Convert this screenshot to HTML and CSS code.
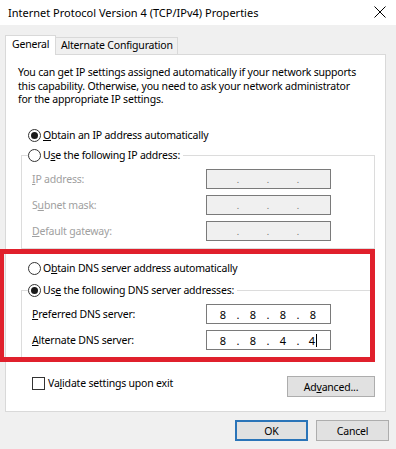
FILE: index.html
```html
<!DOCTYPE html>
<html lang="en">
<head>
  <meta charset="UTF-8">
  <title>Internet Protocol Version 4 (TCP/IPv4) Properties</title>
  <link rel="stylesheet" href="styles.css">
</head>
<body>
  <div class="titlebar">
    <span class="title">Internet Protocol Version 4 (TCP/IPv4) Properties</span>
    <svg class="close" width="12" height="12" viewBox="0 0 12 12">
      <path d="M0.5 0.5 L11.5 11.5 M11.5 0.5 L0.5 11.5" stroke="#000" stroke-width="1" fill="none"/>
    </svg>
  </div>

  <div class="tabs">
    <div class="tab active">General</div>
    <div class="tab">Alternate Configuration</div>
  </div>

  <div class="panel">
    <p class="intro">You can get IP settings assigned automatically if your network supports<br>this capability. Otherwise, you need to ask your network administrator<br>for the appropriate IP settings.</p>

    <label class="radio-row ip-auto"><span class="radio checked"></span><span><u>O</u>btain an IP address automatically</span></label>

    <fieldset class="group ip-group">
      <legend><label class="radio-row"><span class="radio"></span><span>U<u>s</u>e the following IP address:</span></label></legend>
      <div class="field-row disabled">
        <span class="field-label"><u>I</u>P address:</span>
        <div class="ip-box"><span class="octet"></span><span class="dot">.</span><span class="octet"></span><span class="dot">.</span><span class="octet"></span><span class="dot">.</span><span class="octet"></span></div>
      </div>
      <div class="field-row disabled">
        <span class="field-label">S<u>u</u>bnet mask:</span>
        <div class="ip-box"><span class="octet"></span><span class="dot">.</span><span class="octet"></span><span class="dot">.</span><span class="octet"></span><span class="dot">.</span><span class="octet"></span></div>
      </div>
      <div class="field-row disabled">
        <span class="field-label"><u>D</u>efault gateway:</span>
        <div class="ip-box"><span class="octet"></span><span class="dot">.</span><span class="octet"></span><span class="dot">.</span><span class="octet"></span><span class="dot">.</span><span class="octet"></span></div>
      </div>
    </fieldset>

    <label class="radio-row dns-auto"><span class="radio"></span><span>O<u>b</u>tain DNS server address automatically</span></label>

    <fieldset class="group dns-group">
      <legend><label class="radio-row"><span class="radio checked"></span><span>Us<u>e</u> the following DNS server addresses:</span></label></legend>
      <div class="field-row">
        <span class="field-label"><u>P</u>referred DNS server:</span>
        <div class="ip-box"><span class="octet">8</span><span class="dot">.</span><span class="octet">8</span><span class="dot">.</span><span class="octet">8</span><span class="dot">.</span><span class="octet">8</span></div>
      </div>
      <div class="field-row">
        <span class="field-label"><u>A</u>lternate DNS server:</span>
        <div class="ip-box"><span class="octet">8</span><span class="dot">.</span><span class="octet">8</span><span class="dot">.</span><span class="octet">4</span><span class="dot">.</span><span class="octet">4<span class="caret"></span></span></div>
      </div>
    </fieldset>

    <div class="options">
      <label class="check-row"><span class="checkbox"></span><span>Va<u>l</u>idate settings upon exit</span></label>
      <button class="btn advanced">Ad<u>v</u>anced...</button>
    </div>
  </div>

  <div class="footer">
    <button class="btn default">OK</button>
    <button class="btn">Cancel</button>
  </div>

  <!-- highlight drawn over the DNS section -->
  <div class="highlight"></div>
</body>
</html>
```

FILE: styles.css
```css
* {
  margin: 0;
  padding: 0;
  box-sizing: border-box;
}

body {
  width: 396px;
  height: 449px;
  overflow: hidden;
  position: relative;
  background: #f0f0f0;
  font-family: 'Noto Sans', sans-serif;
  font-size: 10.5px;
  letter-spacing: -0.2px;
  color: #000;
}

u {
  text-decoration: underline;
  text-underline-offset: 1px;
}

.titlebar {
  height: 25px;
  background: #fff;
  display: flex;
  align-items: center;
  justify-content: space-between;
  padding: 0 10px 1px 8px;
}

.title {
  font-size: 11px;
  letter-spacing: 0;
}

.tabs {
  display: flex;
  align-items: flex-end;
  height: 19px;
  margin: 10px 0 0 5px;
  position: relative;
  z-index: 1;
  white-space: nowrap;
}

.tab {
  height: 17px;
  border: 1px solid #d9d9d9;
  border-bottom: none;
  background: #f0f0f0;
  line-height: 15px;
  padding-left: 5px;
  width: 123px;
  margin-left: -1px;
}

.tab.active {
  width: 51px;
  height: 20px;
  margin-left: 0;
  margin-bottom: -1px;
  padding-left: 6px;
  line-height: 16px;
  background: #fff;
  position: relative;
  z-index: 2;
}

.panel {
  margin-left: 5px;
  width: 381px;
  height: 358px;
  border: 1px solid #d9d9d9;
  background: #fff;
}

.intro {
  margin: 11px 0 0 12px;
  line-height: 13.5px;
  white-space: nowrap;
}

.radio-row,
.check-row {
  display: flex;
  align-items: center;
  height: 18px;
  white-space: nowrap;
}

.radio {
  width: 13px;
  height: 13px;
  border: 1px solid #333;
  border-radius: 50%;
  background: #fff;
  margin-right: 2px;
  display: flex;
  align-items: center;
  justify-content: center;
  flex-shrink: 0;
}

.radio.checked::after {
  content: '';
  width: 7px;
  height: 7px;
  border-radius: 50%;
  background: #1a1a1a;
}

.checkbox {
  width: 13px;
  height: 13px;
  border: 1px solid #333;
  background: #fff;
  margin-right: 3px;
  flex-shrink: 0;
}

.ip-auto {
  margin: 19.5px 0 0 22px;
}

.dns-auto {
  margin: 10px 0 0 22px;
}

.group {
  border: 1px solid #dcdcdc;
  margin: 2px 10px 0 15px;
  padding: 0 0 7px;
  min-width: 0;
}

.dns-group {
  margin-top: 4px;
}

.group legend {
  margin-left: 6px;
  padding-right: 3px;
}

.field-row {
  display: flex;
  align-items: center;
  padding-left: 10px;
  margin-top: 5px;
}

.field-row + .field-row {
  margin-top: 6px;
}

.field-label {
  width: 174px;
}

.ip-box {
  width: 125px;
  height: 20px;
  border: 1px solid #7a7a7a;
  background: #fff;
  display: flex;
  align-items: center;
  padding-left: 1px;
  font-size: 11px;
  letter-spacing: 0;
}

.octet {
  width: 30px;
  text-align: center;
  position: relative;
}

.dot {
  width: 0;
  display: flex;
  justify-content: center;
}

.caret {
  display: inline-block;
  width: 1px;
  height: 13px;
  background: #000;
  vertical-align: -2px;
  margin-left: 1px;
}

.disabled .field-label {
  color: #a0a0a0;
}

.disabled .ip-box {
  background: #f0f0f0;
}

.disabled .dot {
  color: #6d6d6d;
  font-size: 9px;
}

.options {
  display: flex;
  justify-content: space-between;
  align-items: flex-start;
  margin: 16px 10px 0 26px;
}

.btn {
  font-family: inherit;
  font-size: inherit;
  letter-spacing: inherit;
  color: #000;
  background: #e1e1e1;
  border: 1px solid #adadad;
  width: 73px;
  height: 21px;
  line-height: 18px;
}

.advanced {
  width: 88px;
  margin-top: 2px;
}

.btn.default {
  border: 2px solid #2a74b8;
}

.footer {
  display: flex;
  justify-content: flex-end;
  gap: 8px;
  margin-top: 8px;
  padding-right: 7px;
}

.highlight {
  position: absolute;
  left: 0;
  top: 249px;
  width: 375px;
  height: 113px;
  border: 5px solid #e0202c;
  border-left-width: 4px;
}
```
